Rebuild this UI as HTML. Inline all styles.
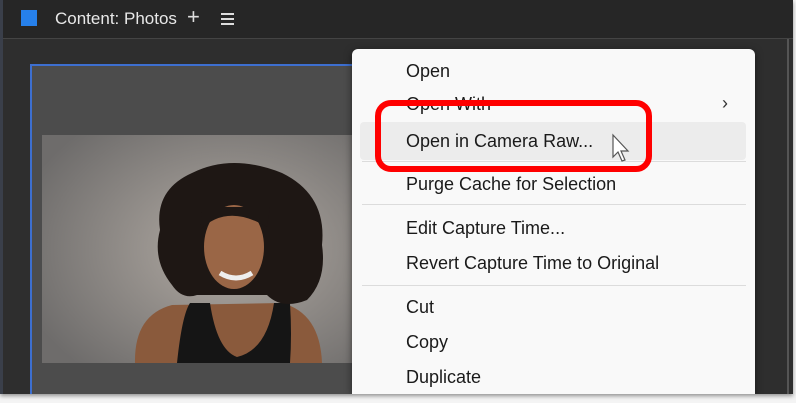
<!DOCTYPE html>
<html><head><style>
body{margin:0;width:796px;height:403px;overflow:hidden;background:#f4f4f4;font-family:"Liberation Sans",sans-serif;position:relative}
.main{position:absolute;left:0;top:0;width:793px;height:394px;background:#2e2e2e;overflow:hidden;box-shadow:0 2px 4px rgba(0,0,0,.4)}
.top{position:absolute;left:0;top:0;width:796px;height:38px;background:#262626;border-bottom:1px solid #444}
.menu{position:absolute;left:352px;top:49px;width:403px;height:345px;background:#f9f9f9;border-radius:6px 6px 0 0;box-shadow:0 2px 8px rgba(0,0,0,.5)}
.it{position:absolute;left:54px;font-size:18px;color:#1a1a1a;line-height:22px}
.sep{position:absolute;left:10px;width:384px;height:1px;background:#dcdcdc}
</style></head><body>
<div class="main">
<div class="top">
<div style="position:absolute;left:21px;top:10px;width:16px;height:16px;background:#2680eb"></div>
<div style="position:absolute;left:55px;top:9px;font-size:17px;color:#e8e8e8">Content: Photos</div>
<div style="position:absolute;left:187px;top:4px;font-size:22px;color:#ddd">+</div>
<div style="position:absolute;left:221px;top:13px;width:13px;height:2px;background:#ddd;box-shadow:0 5px 0 #ddd,0 10px 0 #ddd"></div>
</div>
<div style="position:absolute;left:0;top:0;width:3px;height:394px;background:#3a3f4a"></div>
<div style="position:absolute;left:787px;top:39px;width:2px;height:364px;background:#555"></div>
<div style="position:absolute;left:30px;top:64px;width:340px;height:340px;background:#4c4c4c;border:2px solid #3d6fd0;border-right:none;box-sizing:border-box"></div>
<svg style="position:absolute;left:42px;top:135px" width="310" height="228">
<defs><radialGradient id="g" cx="0.6" cy="0.5" r="0.7"><stop offset="0" stop-color="#b2aba4"/><stop offset="1" stop-color="#6e6c6b"/></radialGradient></defs>
<rect width="310" height="228" fill="url(#g)"/>
<path d="M93 228 Q92 180 130 170 L240 168 Q278 178 280 228Z" fill="#8a5a3c"/>
<path d="M135 228 Q140 180 148 168 L168 168 Q175 215 195 222 Q225 215 232 168 L248 168 Q250 200 248 228Z" fill="#151515"/>
<path d="M130 150 Q110 125 118 95 Q112 55 150 38 Q190 18 240 38 Q285 60 280 110 Q285 145 265 165 Q240 175 225 160 L155 160 Q140 165 130 150Z" fill="#1e1714"/>
<ellipse cx="192" cy="112" rx="30" ry="42" fill="#9a6646"/>
<path d="M158 95 Q185 68 225 92 L228 72 L160 72Z" fill="#1e1714"/>
<path d="M178 138 Q194 148 210 138" stroke="#eee" stroke-width="5" fill="none"/>
</svg>
<div class="menu">
<div class="it" style="top:11px">Open</div>
<div class="it" style="top:44px">Open With</div>
<div style="position:absolute;left:370px;top:44px;font-size:18px;color:#333">›</div>
<div style="position:absolute;left:8px;top:73px;width:386px;height:38px;background:#ececec;border-radius:4px"></div>
<div class="it" style="top:81px">Open in Camera Raw...</div>
<div class="sep" style="top:112px"></div>
<div class="it" style="top:124px">Purge Cache for Selection</div>
<div class="sep" style="top:155px"></div>
<div class="it" style="top:168px">Edit Capture Time...</div>
<div class="it" style="top:203px">Revert Capture Time to Original</div>
<div class="sep" style="top:236px"></div>
<div class="it" style="top:247px">Cut</div>
<div class="it" style="top:282px">Copy</div>
<div class="it" style="top:317px">Duplicate</div>
</div>
<div style="position:absolute;left:375px;top:100px;width:277px;height:72px;border:6px solid #f00;border-radius:16px;box-sizing:border-box"></div>
<svg style="position:absolute;left:611px;top:133px" width="24" height="30"><path d="M2 2 L2 24 L7 19 L11 28 L14 27 L10 18 L17 18 Z" fill="#fff" stroke="#555" stroke-width="1.2"/></svg>
</div>
</body></html>
